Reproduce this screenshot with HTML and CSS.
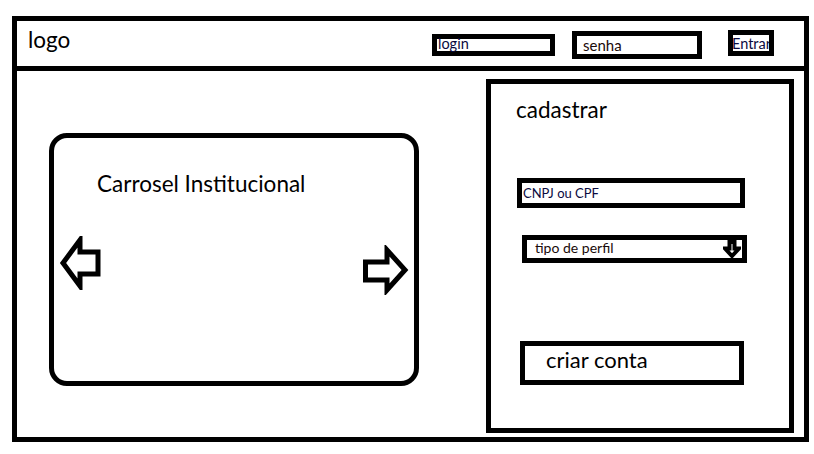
FILE: index.html
```html
<!DOCTYPE html>
<html lang="pt-BR">
<head>
  <meta charset="UTF-8">
  <meta name="viewport" content="width=device-width, initial-scale=1.0">
  <title>Cadastro</title>
  <link rel="stylesheet" href="styles.css">
</head>
<body>
  <div class="frame">
    <header class="topbar">
      <div class="logo">logo</div>
      <div class="field field-login">login</div>
      <div class="field field-senha">senha</div>
      <div class="btn-entrar">Entrar</div>
    </header>

    <main class="content">
      <section class="carousel">
        <h2 class="carousel-title">Carrosel Institucional</h2>
        <div class="carousel-nav">
          <svg class="arrow arrow-left" width="44" height="54" viewBox="0 0 44 54">
            <path d="M5 27 L22 4 L22 16 L40 16 L40 38 L22 38 L22 50 Z" />
          </svg>
          <svg class="arrow arrow-right" width="50" height="50" viewBox="0 0 50 50">
            <path d="M5.5 17 L27 17 L27 5 L45 25 L27 45 L27 35 L5.5 35 Z" />
          </svg>
        </div>
      </section>

      <aside class="signup">
        <h2 class="signup-title">cadastrar</h2>
        <div class="box box-doc">CNPJ ou CPF</div>
        <div class="box box-select">
          <span>tipo de perfil</span>
          <svg class="select-icon" width="18" height="18" viewBox="0 0 18 18">
            <path d="M6.5 2 L11.5 2 L11.5 8.5 L16 8.5 L9 16 L2 8.5 L6.5 8.5 Z" />
          </svg>
        </div>
        <div class="box box-submit">criar conta</div>
      </aside>
    </main>
  </div>
</body>
</html>
```

FILE: styles.css
```css
* {
  box-sizing: border-box;
}
body {
  margin: 0;
  background: #fff;
  color: #000;
  font-family: Lato, "Open Sans", sans-serif;
}
h2 {
  margin: 0;
  font-weight: normal;
}
.frame {
  margin: 16px 0 0 12px;
  width: 797px;
  height: 426px;
  border: 5px solid #000;
  display: flex;
  flex-direction: column;
}

/* top bar */
.topbar {
  height: 50px;
  border-bottom: 5px solid #000;
  display: flex;
  align-items: flex-start;
  padding: 0 30px 0 11px;
}
.logo {
  flex: 1;
  margin-top: 6px;
  font-size: 22.5px;
  line-height: 25px;
}
.field {
  border: 5px solid #000;
}
.field-login {
  width: 123px;
  height: 22px;
  margin-top: 13px;
  padding-left: 1px;
  font-size: 14.5px;
  line-height: 10px;
  color: #0a0a40;
}
.field-senha {
  width: 130px;
  height: 28px;
  margin-top: 10px;
  margin-left: 17px;
  padding-left: 6px;
  font-size: 15px;
  line-height: 18px;
  color: #1a0a0a;
}
.btn-entrar {
  width: 46px;
  height: 26px;
  margin-top: 9px;
  margin-left: 26px;
  border: 5px solid #000;
  font-size: 14.5px;
  line-height: 18px;
  text-indent: -1px;
  overflow: hidden;
  white-space: nowrap;
  color: #0a0a40;
}

/* main area */
.content {
  flex: 1;
  display: flex;
  align-items: flex-start;
}
.carousel {
  width: 370px;
  height: 253px;
  margin: 62px 0 0 32px;
  border: 5px solid #000;
  border-radius: 18px;
  padding: 0 4px;
}
.carousel-title {
  margin-top: 33px;
  padding-left: 39px;
  font-size: 22.5px;
  line-height: 25px;
}
.carousel-nav {
  margin-top: 40px;
  display: flex;
  justify-content: space-between;
  align-items: flex-start;
}
.arrow {
  display: block;
}
.arrow path {
  fill: #fff;
  stroke: #000;
  stroke-width: 5;
  stroke-linejoin: miter;
}
.arrow-right {
  margin-top: 9px;
}

/* signup panel */
.signup {
  width: 308px;
  height: 354px;
  margin: 8px 10px 0 auto;
  border: 5px solid #000;
}
.signup-title {
  margin: 13px 0 0 25px;
  font-size: 22.5px;
  line-height: 25px;
}
.box {
  border: 5px solid #000;
}
.box-doc {
  width: 228px;
  height: 30px;
  margin: 56px 0 0 26px;
  padding-left: 1px;
  font-size: 13px;
  line-height: 20px;
  color: #0a0a40;
}
.box-select {
  width: 225px;
  height: 28px;
  margin: 27px 0 0 31px;
  padding: 0 1px 0 8px;
  display: flex;
  justify-content: space-between;
  align-items: flex-start;
  font-size: 14px;
  line-height: 16px;
  color: #1a0a0a;
}
.select-icon {
  display: block;
}
.select-icon path {
  fill: #fff;
  stroke: #000;
  stroke-width: 4;
}
.box-submit {
  width: 224px;
  height: 44px;
  margin: 78px 0 0 29px;
  padding-left: 21px;
  font-size: 22px;
  line-height: 27px;
}
```
